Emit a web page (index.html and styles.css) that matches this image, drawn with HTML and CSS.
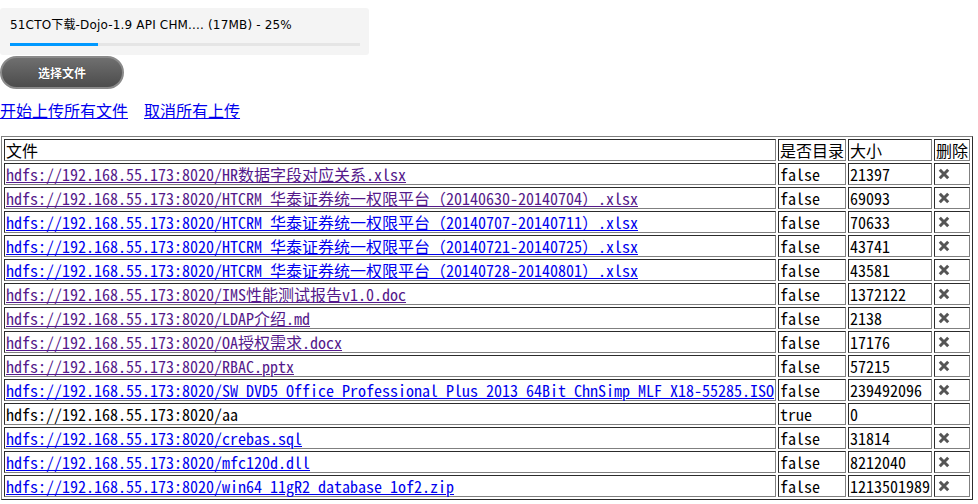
FILE: index.html
```html
<!DOCTYPE html>
<html>
<head>
<meta charset="utf-8">
<link rel="stylesheet" href="styles.css">
</head>
<body>
<div class="queue-item">
  <div class="queue-name">51CTO下载-Dojo-1.9 API CHM.... (17MB) - 25%</div>
  <div class="progress"><div class="progress-bar" style="width:25%"></div></div>
</div>
<div class="select-btn">选择文件</div>
<div class="actions">
  <a href="#" class="link">开始上传所有文件</a><a href="#" class="link cancel">取消所有上传</a>
</div>
<table class="files">
  <tr><td>文件</td><td>是否目录</td><td>大小</td><td>删除</td></tr>
  <tr><td><a href="#" class="visited">hdfs://192.168.55.173:8020/HR数据字段对应关系.xlsx</a></td><td>false</td><td>21397</td><td><span class="del"><svg viewBox="0 0 12 12" width="12" height="12"><path d="M1.8 1.8L10.2 10.2M10.2 1.8L1.8 10.2"/></svg></span></td></tr>
  <tr><td><a href="#" class="visited">hdfs://192.168.55.173:8020/HTCRM_华泰证券统一权限平台（20140630-20140704）.xlsx</a></td><td>false</td><td>69093</td><td><span class="del"><svg viewBox="0 0 12 12" width="12" height="12"><path d="M1.8 1.8L10.2 10.2M10.2 1.8L1.8 10.2"/></svg></span></td></tr>
  <tr><td><a href="#">hdfs://192.168.55.173:8020/HTCRM_华泰证券统一权限平台（20140707-20140711）.xlsx</a></td><td>false</td><td>70633</td><td><span class="del"><svg viewBox="0 0 12 12" width="12" height="12"><path d="M1.8 1.8L10.2 10.2M10.2 1.8L1.8 10.2"/></svg></span></td></tr>
  <tr><td><a href="#">hdfs://192.168.55.173:8020/HTCRM_华泰证券统一权限平台（20140721-20140725）.xlsx</a></td><td>false</td><td>43741</td><td><span class="del"><svg viewBox="0 0 12 12" width="12" height="12"><path d="M1.8 1.8L10.2 10.2M10.2 1.8L1.8 10.2"/></svg></span></td></tr>
  <tr><td><a href="#">hdfs://192.168.55.173:8020/HTCRM_华泰证券统一权限平台（20140728-20140801）.xlsx</a></td><td>false</td><td>43581</td><td><span class="del"><svg viewBox="0 0 12 12" width="12" height="12"><path d="M1.8 1.8L10.2 10.2M10.2 1.8L1.8 10.2"/></svg></span></td></tr>
  <tr><td><a href="#" class="visited">hdfs://192.168.55.173:8020/IMS性能测试报告v1.0.doc</a></td><td>false</td><td>1372122</td><td><span class="del"><svg viewBox="0 0 12 12" width="12" height="12"><path d="M1.8 1.8L10.2 10.2M10.2 1.8L1.8 10.2"/></svg></span></td></tr>
  <tr><td><a href="#" class="visited">hdfs://192.168.55.173:8020/LDAP介绍.md</a></td><td>false</td><td>2138</td><td><span class="del"><svg viewBox="0 0 12 12" width="12" height="12"><path d="M1.8 1.8L10.2 10.2M10.2 1.8L1.8 10.2"/></svg></span></td></tr>
  <tr><td><a href="#" class="visited">hdfs://192.168.55.173:8020/OA授权需求.docx</a></td><td>false</td><td>17176</td><td><span class="del"><svg viewBox="0 0 12 12" width="12" height="12"><path d="M1.8 1.8L10.2 10.2M10.2 1.8L1.8 10.2"/></svg></span></td></tr>
  <tr><td><a href="#" class="visited">hdfs://192.168.55.173:8020/RBAC.pptx</a></td><td>false</td><td>57215</td><td><span class="del"><svg viewBox="0 0 12 12" width="12" height="12"><path d="M1.8 1.8L10.2 10.2M10.2 1.8L1.8 10.2"/></svg></span></td></tr>
  <tr><td><a href="#">hdfs://192.168.55.173:8020/SW_DVD5_Office_Professional_Plus_2013_64Bit_ChnSimp_MLF_X18-55285.ISO</a></td><td>false</td><td>239492096</td><td><span class="del"><svg viewBox="0 0 12 12" width="12" height="12"><path d="M1.8 1.8L10.2 10.2M10.2 1.8L1.8 10.2"/></svg></span></td></tr>
  <tr><td>hdfs://192.168.55.173:8020/aa</td><td>true</td><td>0</td><td></td></tr>
  <tr><td><a href="#">hdfs://192.168.55.173:8020/crebas.sql</a></td><td>false</td><td>31814</td><td><span class="del"><svg viewBox="0 0 12 12" width="12" height="12"><path d="M1.8 1.8L10.2 10.2M10.2 1.8L1.8 10.2"/></svg></span></td></tr>
  <tr><td><a href="#">hdfs://192.168.55.173:8020/mfc120d.dll</a></td><td>false</td><td>8212040</td><td><span class="del"><svg viewBox="0 0 12 12" width="12" height="12"><path d="M1.8 1.8L10.2 10.2M10.2 1.8L1.8 10.2"/></svg></span></td></tr>
  <tr><td><a href="#">hdfs://192.168.55.173:8020/win64_11gR2_database_1of2.zip</a></td><td>false</td><td>1213501989</td><td><span class="del"><svg viewBox="0 0 12 12" width="12" height="12"><path d="M1.8 1.8L10.2 10.2M10.2 1.8L1.8 10.2"/></svg></span></td></tr>
</table>
</body>
</html>
```
FILE: styles.css
```css
html, body {
  margin: 0;
  padding: 0;
  background: #fff;
}
body {
  font-family: "Noto Sans Mono CJK SC", "Noto Sans CJK SC", "Liberation Mono", monospace;
  font-size: 16px;
  color: #000;
}
.queue-item {
  margin-top: 8px;
  width: 350px;
  padding: 10px 9px 9px 10px;
  background: #f4f4f4;
  border-radius: 3px;
}
.queue-name {
  font-family: "DejaVu Sans", "Noto Sans CJK SC", sans-serif;
  font-size: 12px;
  letter-spacing: 0.17px;
  line-height: 15px;
  color: #000;
}
.progress {
  margin-top: 10px;
  height: 3px;
  background: #e5e5e5;
}
.progress-bar {
  height: 3px;
  background: #0099ff;
}
.select-btn {
  width: 120px;
  height: 29px;
  margin-top: 1px;
  border: 2px solid #8a8a8a;
  border-radius: 17px;
  background: linear-gradient(#6f6f6f, #4c4c4c);
  color: #fff;
  font-family: "Noto Sans CJK SC", sans-serif;
  font-weight: bold;
  font-size: 12px;
  line-height: 29px;
  text-align: center;
  text-shadow: 0 0 1px #222;
}
.actions {
  margin-top: 11px;
  line-height: 20px;
  font-family: "Noto Sans Mono CJK SC", "Noto Sans CJK SC", sans-serif;
  font-size: 16px;
}
.link {
  color: #0000ee;
  text-decoration: underline;
}
.cancel {
  margin-left: 16px;
}
.files {
  margin-top: 16px;
  margin-left: 1px;
  border: 1px outset grey;
  border-spacing: 2px;
  font-size: 16px;
}
.files td {
  border: 1px inset grey;
  padding: 1px;
  line-height: 18px;
  height: 18px;
  white-space: nowrap;
  vertical-align: middle;
}
.files a {
  color: #0000ee;
  text-decoration: underline;
}
.files a.visited {
  color: #551a8b;
}
.del {
  display: inline-block;
  width: 16px;
  height: 18px;
  vertical-align: top;
}
.del svg {
  display: block;
  margin: 3px 0 0 2px;
  fill: none;
  stroke: #555;
  stroke-width: 3;
  stroke-linecap: butt;
}
```
